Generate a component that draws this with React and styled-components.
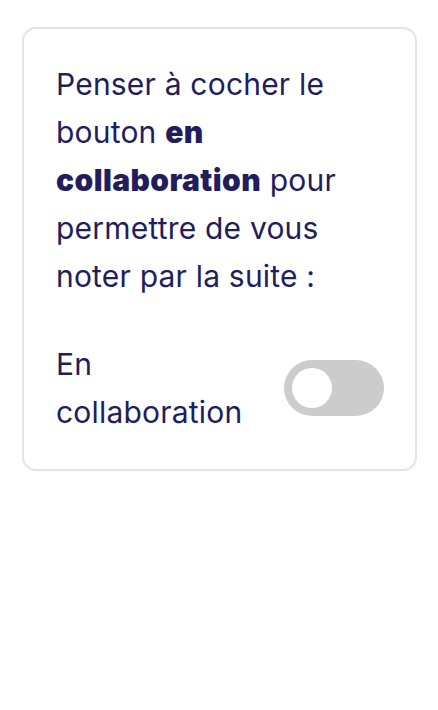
import React, { useState } from 'react';
import styled, { createGlobalStyle } from 'styled-components';

const GlobalStyle = createGlobalStyle`
  body {
    margin: 0;
    background: #ffffff;
    font-family: Inter, "Noto Sans", sans-serif;
  }
`;

const Page = styled.div`
  padding: 27px 21px 0 22px;
`;

const Card = styled.div`
  border: 2px solid #e2e4e9;
  border-radius: 14px;
  padding: 31px 31px 33px 32px;
  color: #221d5c;
`;

const Message = styled.p`
  margin: 0;
  font-size: 30px;
  line-height: 48px;
  letter-spacing: 0.2px;
  font-weight: 400;

  strong {
    font-weight: 900;
    letter-spacing: 0.4px;
  }
`;

const ToggleRow = styled.label`
  display: flex;
  align-items: center;
  justify-content: space-between;
  margin-top: 40px;
  cursor: pointer;
`;

const ToggleLabel = styled.span`
  max-width: 200px;
  font-size: 30px;
  line-height: 48px;
  letter-spacing: 0.2px;
`;

const Track = styled.span`
  position: relative;
  flex-shrink: 0;
  width: 100px;
  height: 56px;
  border-radius: 28px;
  background: ${props => (props.$on ? '#221d5c' : '#cccccc')};
  transition: background-color 0.2s;
`;

const Knob = styled.span`
  position: absolute;
  top: 8px;
  left: ${props => (props.$on ? '52px' : '8px')};
  width: 40px;
  height: 40px;
  border-radius: 50%;
  background: #ffffff;
  transition: left 0.2s;
`;

const HiddenInput = styled.input`
  position: absolute;
  opacity: 0;
  width: 0;
  height: 0;
`;

const App = () => {
  const [collab, setCollab] = useState(false);

  return (
    <>
      <GlobalStyle />
      <Page>
        <Card>
          <Message>
            Penser à cocher le bouton <strong>en collaboration</strong> pour permettre de vous noter par la suite :
          </Message>
          <ToggleRow>
            <ToggleLabel>En collaboration</ToggleLabel>
            <HiddenInput
              type="checkbox"
              checked={collab}
              onChange={e => setCollab(e.target.checked)}
            />
            <Track $on={collab}>
              <Knob $on={collab} />
            </Track>
          </ToggleRow>
        </Card>
      </Page>
    </>
  );
};

export default App;
